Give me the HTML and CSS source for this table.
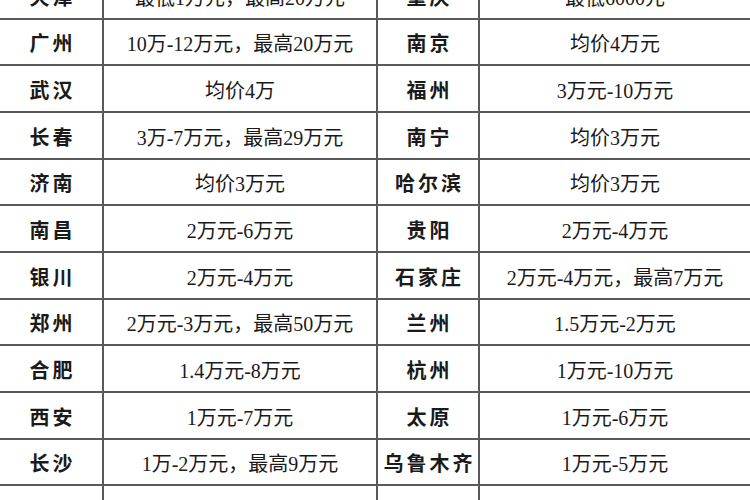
FILE: index.html
```html
<!DOCTYPE html>
<html lang="zh">
<head>
<meta charset="utf-8">
<link rel="stylesheet" href="styles.css">
</head>
<body>
<div class="table">
  <div class="city">天津</div><div class="val">最低1万元，最高20万元</div><div class="city">重庆</div><div class="val last">最低6000元</div>
  <div class="city">广州</div><div class="val">10万-12万元，最高20万元</div><div class="city">南京</div><div class="val last">均价4万元</div>
  <div class="city">武汉</div><div class="val">均价4万</div><div class="city">福州</div><div class="val last">3万元-10万元</div>
  <div class="city">长春</div><div class="val">3万-7万元，最高29万元</div><div class="city">南宁</div><div class="val last">均价3万元</div>
  <div class="city">济南</div><div class="val">均价3万元</div><div class="city">哈尔滨</div><div class="val last">均价3万元</div>
  <div class="city">南昌</div><div class="val">2万元-6万元</div><div class="city">贵阳</div><div class="val last">2万元-4万元</div>
  <div class="city">银川</div><div class="val">2万元-4万元</div><div class="city">石家庄</div><div class="val last">2万元-4万元，最高7万元</div>
  <div class="city">郑州</div><div class="val">2万元-3万元，最高50万元</div><div class="city">兰州</div><div class="val last">1.5万元-2万元</div>
  <div class="city">合肥</div><div class="val">1.4万元-8万元</div><div class="city">杭州</div><div class="val last">1万元-10万元</div>
  <div class="city">西安</div><div class="val">1万元-7万元</div><div class="city">太原</div><div class="val last">1万元-6万元</div>
  <div class="city">长沙</div><div class="val">1万-2万元，最高9万元</div><div class="city">乌鲁木齐</div><div class="val last">1万元-5万元</div>
  <div class="city">海口</div><div class="val">1万元-3万元</div><div class="city">西宁</div><div class="val last">1万元-3万元</div>
</div>
</body>
</html>
```
FILE: styles.css
```css
html, body {
  margin: 0;
  padding: 0;
  background: #ffffff;
  overflow: hidden;
}
.table {
  width: 750px;
  margin-top: -27px;
  display: grid;
  grid-template-columns: 104px 274px 102px 270px;
  grid-auto-rows: 46.67px;
  color: #1a1a1a;
}
.table > div {
  box-sizing: border-box;
  border-bottom: 2px solid #595959;
  border-right: 2px solid #595959;
  display: flex;
  align-items: center;
  justify-content: center;
  white-space: nowrap;
  padding-top: 2px;
}
.table > div.last {
  border-right: none;
}
.city {
  font-family: "Noto Sans CJK SC", sans-serif;
  font-weight: 700;
  font-size: 20px;
  letter-spacing: 3px;
  text-indent: 3px;
}
.val {
  font-family: "Liberation Serif", "Noto Sans CJK SC", serif;
  font-size: 20px;
}
```
